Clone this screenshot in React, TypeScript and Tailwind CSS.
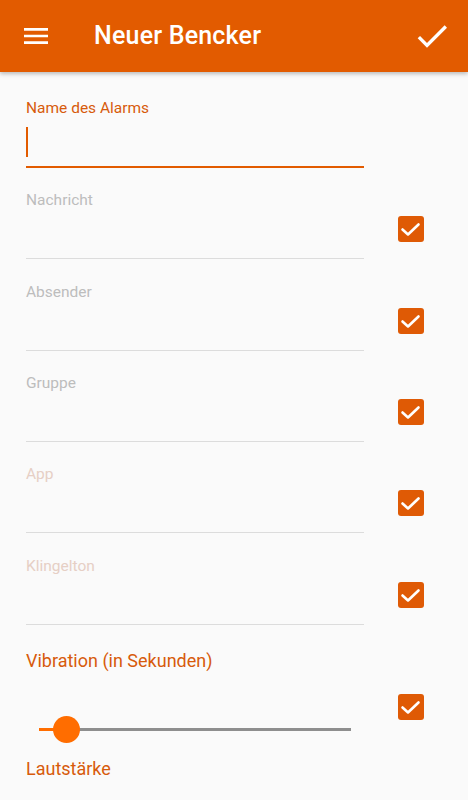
import React from 'react';

const fields = [
  { label: 'Nachricht', color: 'text-[#bdbdbd]', h: 'h-[92px]' },
  { label: 'Absender', color: 'text-[#bdbdbd]', h: 'h-[91px]' },
  { label: 'Gruppe', color: 'text-[#bdbdbd]', h: 'h-[91px]' },
  { label: 'App', color: 'text-[#e6cfc5]', h: 'h-[92px]' },
  { label: 'Klingelton', color: 'text-[#e6cfc5]', h: 'h-[91px]' },
];

function CheckBox({ className = '' }: { className?: string }) {
  return (
    <div className={`w-[26px] h-[26px] rounded-[3px] bg-[#df5a05] shrink-0 ${className}`}>
      <svg width="26" height="26" viewBox="0 0 26 26">
        <polyline points="4.5,13.5 10,18.5 20.5,8.5" fill="none" stroke="#fff" strokeWidth="2.6" strokeLinecap="round" strokeLinejoin="round" />
      </svg>
    </div>
  );
}

export default function App() {
  return (
    <div className="w-[468px] h-[800px] overflow-hidden bg-[#fafafa] font-['Roboto',sans-serif]">
      {/* Toolbar */}
      <div className="h-[72px] bg-[#e25b00] flex items-center shadow-[0_2px_4px_rgba(0,0,0,0.25)] relative z-10">
        <svg className="ml-[20px]" width="32" height="32" viewBox="0 0 24 24" fill="#fff">
          <path d="M3 18h18v-2H3v2zm0-5h18v-2H3v2zm0-7v2h18V6H3z" />
        </svg>
        <h1 className="ml-[42px] text-white text-[25px] font-medium tracking-[0.2px]">Neuer Bencker</h1>
        <svg className="ml-auto mr-[16px]" width="40" height="40" viewBox="0 0 24 24" fill="#fff">
          <path d="M9 16.17L4.83 12l-1.42 1.41L9 19 21 7l-1.41-1.41z" />
        </svg>
      </div>

      <div className="pl-[26px]">
        {/* Name */}
        <div className="w-[338px] pt-[26px]">
          <div className="text-[15.5px] leading-[20px] text-[#d75b0c]">Name des Alarms</div>
          <div className="h-[48px] flex items-center">
            <div className="w-[2px] h-[30px] bg-[#e25b00]" />
          </div>
          <div className="h-[2px] bg-[#e25b00]" />
        </div>

        {/* Optional fields */}
        <div className="pt-[22px]">
          {fields.map((f) => (
            <div key={f.label} className={`flex items-start ${f.h}`}>
              <div className="w-[338px]">
                <div className={`text-[15.5px] leading-[20px] ${f.color}`}>{f.label}</div>
                <div className="h-[48px]" />
                <div className="h-px bg-[#dcdcdc]" />
              </div>
              <CheckBox className="ml-[34px] mt-[26px]" />
            </div>
          ))}
        </div>

        {/* Vibration */}
        <div className="pt-[2px]">
          <div className="text-[18px] leading-[24px] text-[#d75b0c]">Vibration (in Sekunden)</div>
          <div className="flex items-start">
            <div className="w-[338px] pt-[42px]">
              <div className="relative ml-[13px] w-[312px] h-[28px] flex items-center">
                <div className="w-[16px] h-[3px] bg-[#ff6d00]" />
                <div className="flex-1 h-[3px] bg-[#8e8e8e]" />
                <div className="absolute left-[14px] top-[0.5px] w-[27px] h-[27px] rounded-full bg-[#ff6d00]" />
              </div>
            </div>
            <CheckBox className="ml-[34px] mt-[21px]" />
          </div>
          <div className="mt-[14px] text-[18px] leading-[24px] text-[#d75b0c]">Lautstärke</div>
        </div>
      </div>
    </div>
  );
}
